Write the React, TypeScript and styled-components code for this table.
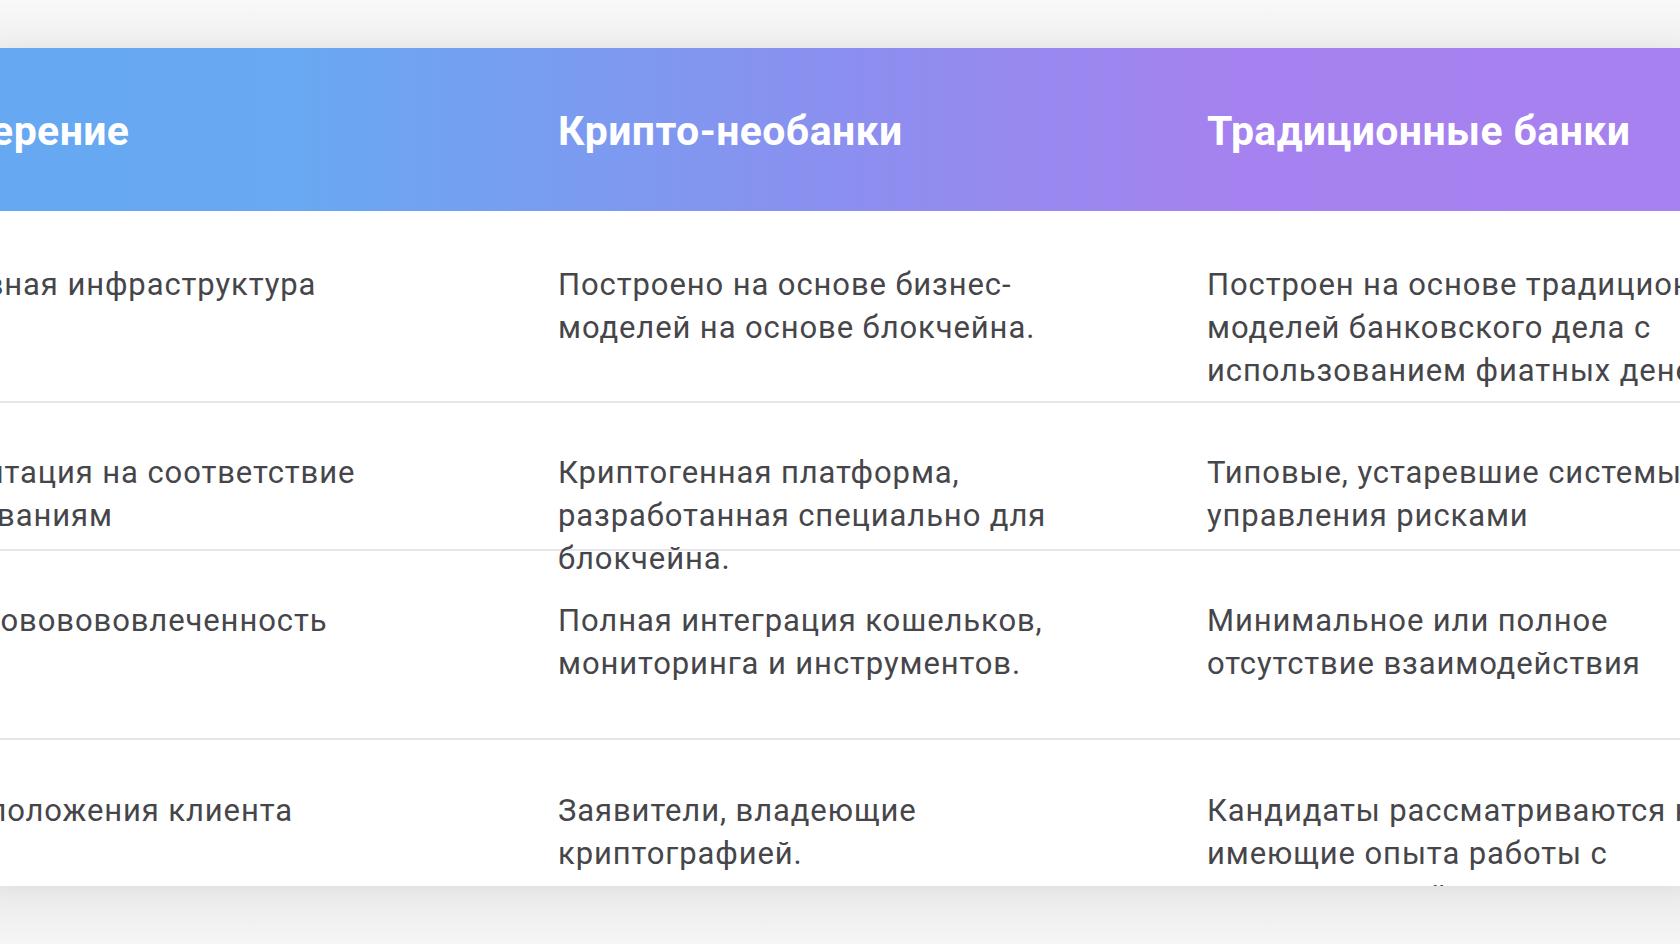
import React from "react";
import styled, { createGlobalStyle } from "styled-components";

const GlobalStyle = createGlobalStyle`
  html, body {
    margin: 0;
    padding: 0;
  }
  body {
    background: #f4f4f5;
    font-family: Roboto, "Noto Sans", "Liberation Sans", sans-serif;
  }
`;

const SPage = styled.div`
  height: 100vh;
  box-sizing: border-box;
  padding: 48px 0 58px;
  background: linear-gradient(
    180deg,
    #f9f9f9 0px,
    #efeff0 48px,
    #e9e9ea calc(100% - 58px),
    #f6f6f6 100%
  );
  overflow: hidden;
`;

const SCard = styled.div`
  height: 100%;
  background: #ffffff;
  overflow: hidden;
  box-shadow: 0 0 24px rgba(0, 0, 0, 0.05);
`;

// the table is wider than the card and scrolled sideways
const STable = styled.div`
  width: max-content;
  margin-left: -91px;
`;

const SRow = styled.div<{ $h: number }>`
  display: grid;
  grid-template-columns: repeat(3, 649px);
  height: ${(p) => p.$h}px;
  box-sizing: border-box;
  border-bottom: 2px solid #e5e5ea;
`;

const SHeadRow = styled(SRow)`
  align-items: center;
  border-bottom: none;
  background: linear-gradient(
    90deg,
    #65a8f2 0%,
    #69a8f2 20%,
    #8b8fef 48%,
    #a582ef 68%,
    #a780ef 100%
  );
`;

const SHeadCell = styled.div`
  padding-top: 3px;
  color: #ffffff;
  font-size: 41px;
  font-weight: 700;
  letter-spacing: 0.4px;
  white-space: nowrap;
`;

const SCell = styled.div<{ $pt: number }>`
  padding-top: ${(p) => p.$pt}px;
  color: #46464a;
  font-size: 31px;
  line-height: 43px;
  letter-spacing: 0.9px;
`;

const SLine = styled.span`
  display: block;
  white-space: nowrap;
`;

const heads = ["Измерение", "Крипто-необанки", "Традиционные банки"];

const rows: { h: number; pt: number; cells: string[][] }[] = [
  {
    h: 192,
    pt: 52,
    cells: [
      ["Основная инфраструктура"],
      ["Построено на основе бизнес-", "моделей на основе блокчейна."],
      [
        "Построен на основе традиционных",
        "моделей банковского дела с",
        "использованием фиатных денег.",
      ],
    ],
  },
  {
    h: 148,
    pt: 48,
    cells: [
      ["Ориентация на соответствие", "требованиям"],
      ["Криптогенная платформа,", "разработанная специально для", "блокчейна."],
      ["Типовые, устаревшие системы", "управления рисками"],
    ],
  },
  {
    h: 189,
    pt: 48,
    cells: [
      ["Криптововововлеченность"],
      ["Полная интеграция кошельков,", "мониторинга и инструментов."],
      ["Минимальное или полное", "отсутствие взаимодействия"],
    ],
  },
  {
    h: 200,
    pt: 49,
    cells: [
      ["Учёт положения клиента"],
      ["Заявители, владеющие", "криптографией."],
      [
        "Кандидаты рассматриваются как не",
        "имеющие опыта работы с",
        "криптовалютой.",
      ],
    ],
  },
];

const App = () => {
  return (
    <>
      <GlobalStyle />
      <SPage>
        <SCard>
          <STable>
            <SHeadRow $h={163}>
              {heads.map((h) => (
                <SHeadCell key={h}>{h}</SHeadCell>
              ))}
            </SHeadRow>
            {rows.map((row, i) => (
              <SRow key={i} $h={row.h}>
                {row.cells.map((lines, j) => (
                  <SCell key={j} $pt={row.pt}>
                    {lines.map((l) => (
                      <SLine key={l}>{l}</SLine>
                    ))}
                  </SCell>
                ))}
              </SRow>
            ))}
          </STable>
        </SCard>
      </SPage>
    </>
  );
};

export default App;
